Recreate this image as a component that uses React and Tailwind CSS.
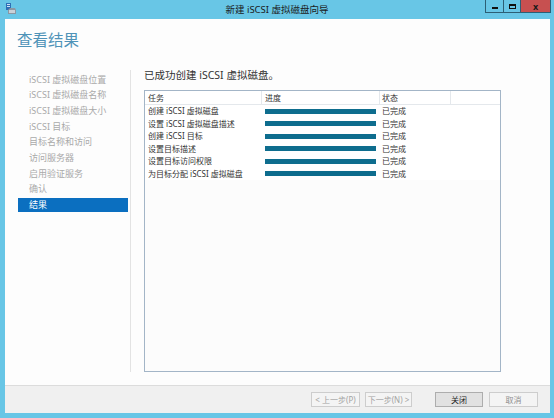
const FONT = { fontFamily: '"Noto Sans", "Noto Sans CJK SC", sans-serif' };

const steps = [
  { label: 'iSCSI 虚拟磁盘位置' },
  { label: 'iSCSI 虚拟磁盘名称' },
  { label: 'iSCSI 虚拟磁盘大小' },
  { label: 'iSCSI 目标' },
  { label: '目标名称和访问' },
  { label: '访问服务器' },
  { label: '启用验证服务' },
  { label: '确认' },
  { label: '结果', active: true },
];

const tasks = [
  '创建 iSCSI 虚拟磁盘',
  '设置 iSCSI 虚拟磁盘描述',
  '创建 iSCSI 目标',
  '设置目标描述',
  '设置目标访问权限',
  '为目标分配 iSCSI 虚拟磁盘',
];

function TitleBar() {
  return (
    <div className="relative h-[19px] flex items-center justify-center">
      <svg className="absolute left-[5px] top-[3px]" width="12" height="12" viewBox="0 0 12 12">
        <rect x="1" y="0" width="5" height="7" fill="#2f6fb5" />
        <rect x="2" y="1" width="3" height="1" fill="#cfe3f5" />
        <rect x="2" y="3" width="3" height="1" fill="#cfe3f5" />
        <path d="M3 7 L5 5 L10 5 L11 7 L11 11 L3 11 Z" fill="#8a97a3" />
        <rect x="4" y="7" width="6" height="3" fill="#c9d1d8" />
      </svg>
      <span className="text-[9.5px] text-[#1b1b1b] leading-none">新建 iSCSI 虚拟磁盘向导</span>
      <div className="absolute right-[3px] top-0 flex h-[13px] border border-t-0 border-[#2c5f75]">
        <div className="w-[18px] flex items-center justify-center border-r border-[#2c5f75]">
          <div className="w-[6px] h-[2px] bg-[#111] mt-[3px]" />
        </div>
        <div className="w-[17px] flex items-center justify-center border-r border-[#2c5f75]">
          <div className="w-[7px] h-[5px] border border-t-2 border-[#111]" />
        </div>
        <div className="w-[29px] flex items-center justify-center bg-[#c75050] text-[9px] font-bold text-[#1a1a1a] leading-none">
          x
        </div>
      </div>
    </div>
  );
}

function Button({ children, primary, disabled, width }) {
  return (
    <div
      className={
        'h-[15px] flex items-center justify-center text-[8px] leading-none border ' +
        width +
        ' ' +
        (primary
          ? 'bg-[#e1e1e1] border-[#adadad] text-[#1e1e1e]'
          : disabled
          ? 'bg-[#f4f4f4] border-[#cdcdcd] text-[#a3a3a3]'
          : 'bg-[#f4f4f4] border-[#cdcdcd] text-[#8f8f8f]')
      }
    >
      {children}
    </div>
  );
}

export default function App() {
  return (
    <div className="w-[554px] h-[418px] bg-[#68c6e6] flex flex-col" style={FONT}>
      <TitleBar />
      <div className="ml-[5px] mr-[4px] mb-[5px] flex-1 bg-[#fdfdfd] flex flex-col">
        <div className="h-[43px] pl-[12px] pt-[14px]">
          <h1 className="text-[15.5px] leading-none text-[#4f93b8]">查看结果</h1>
        </div>

        <div className="flex flex-1 pt-[8px] pb-[13px]">
          <div className="w-[126px] border-r border-[#e3e3e3] pl-[13px] pr-[2px] pt-[2px] flex flex-col gap-[1.7px]">
            {steps.map(({ label, active }) => (
              <div
                key={label}
                className={
                  'h-[14px] pl-[11px] flex items-center text-[9px] leading-none ' +
                  (active ? 'bg-[#0b6fc0] text-white' : 'text-[#a9a9a9]')
                }
              >
                {label}
              </div>
            ))}
          </div>

          <div className="flex-1 -mt-[8px] -mb-[13px] pt-[6px] pb-[13px] pl-[13px] flex flex-col">
            <p className="h-[14px] text-[10.5px] leading-[14px] text-[#333]">已成功创建 iSCSI 虚拟磁盘。</p>
            <div className="mt-[8px] w-[357px] flex-1 border border-[#a3b5c7] bg-[#fcfcfc] flex flex-col">
              <div className="h-[14px] flex text-[8px] text-[#333] border-b border-[#e4e8ec] bg-white">
                <div className="w-[117px] pl-[3px] flex items-center border-r border-[#e4e8ec]">任务</div>
                <div className="w-[118px] pl-[3px] flex items-center border-r border-[#e4e8ec]">进度</div>
                <div className="w-[71px] pl-[2px] flex items-center border-r border-[#e4e8ec]">状态</div>
                <div className="flex-1" />
              </div>
              {tasks.map((t) => (
                <div key={t} className="h-[12.5px] flex items-center text-[8px] leading-none text-[#333] bg-white">
                  <div className="w-[117px] pl-[3px] whitespace-nowrap">{t}</div>
                  <div className="w-[118px] pl-[3px]">
                    <div className="w-[111px] h-[5px] bg-[#0e6d8e]" />
                  </div>
                  <div className="w-[71px] pl-[2px]">已完成</div>
                  <div className="flex-1" />
                </div>
              ))}
            </div>
          </div>
        </div>

        <div className="h-[28px] border-t border-[#dcdcdc] bg-[#f0f0f0] flex items-start pt-[6px] pr-[12px] justify-end">
          <Button disabled width="w-[49px]">&lt; 上一步(P)</Button>
          <div className="w-[5px]" />
          <Button disabled width="w-[47px]">下一步(N) &gt;</Button>
          <div className="w-[23px]" />
          <Button primary width="w-[48px]">关闭</Button>
          <div className="w-[6px]" />
          <Button width="w-[49px]">取消</Button>
        </div>
      </div>
    </div>
  );
}
